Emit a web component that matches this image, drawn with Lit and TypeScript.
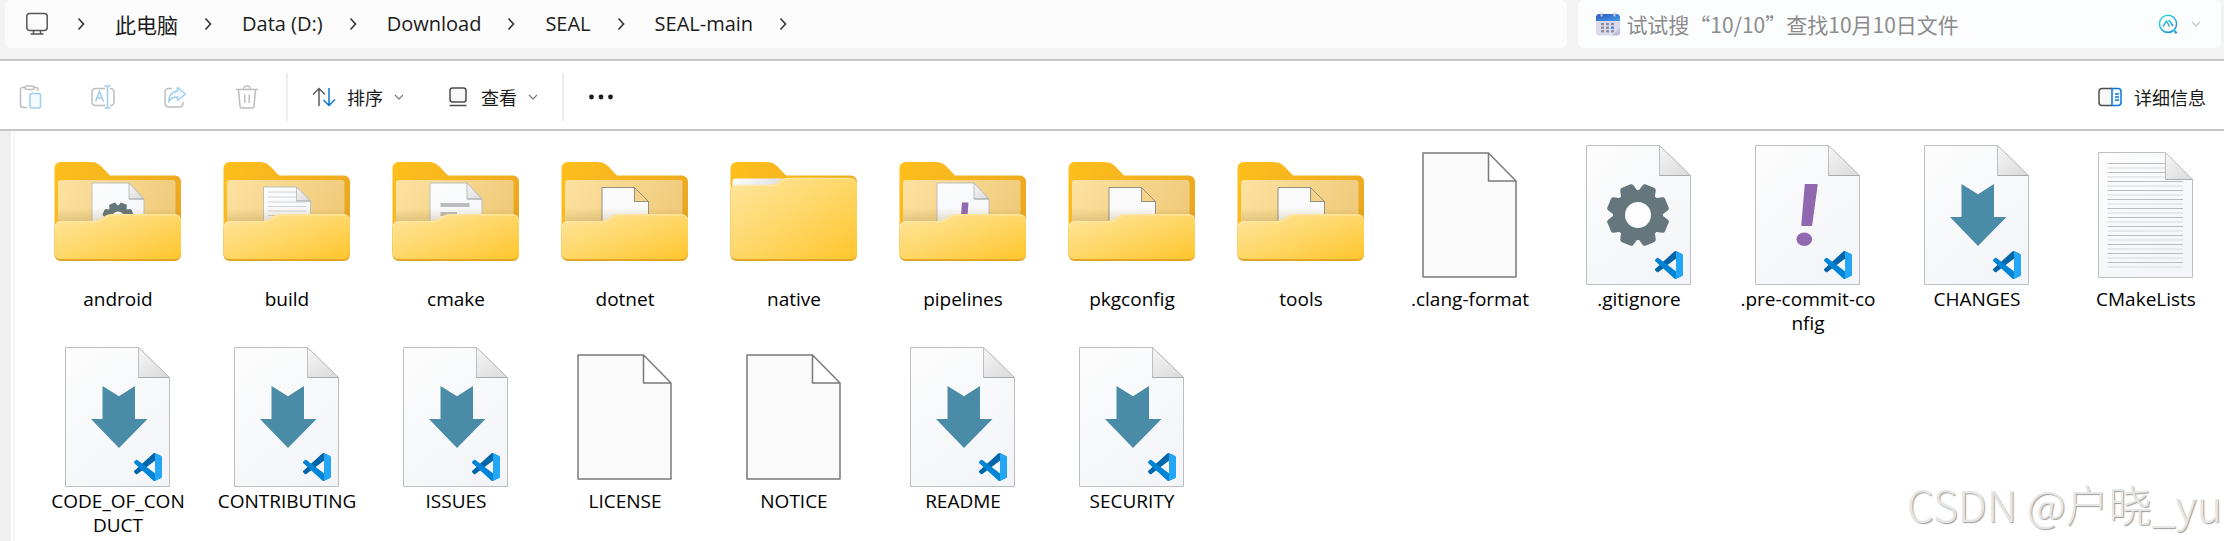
import { LitElement, html, svg, css } from "lit";
import { customElement, state } from "lit/decorators.js";

type Badge = "gear" | "bang" | "arrow";
type Inner = "gear" | "bang" | "bars" | "lines" | "blank" | "closed";

interface Entry {
  name: string;
  kind: "folder" | "code" | "text" | "blank";
  detail?: Badge | Inner;
}

const ENTRIES: Entry[] = [
  { name: "android", kind: "folder", detail: "gear" },
  { name: "build", kind: "folder", detail: "lines" },
  { name: "cmake", kind: "folder", detail: "bars" },
  { name: "dotnet", kind: "folder", detail: "blank" },
  { name: "native", kind: "folder", detail: "closed" },
  { name: "pipelines", kind: "folder", detail: "bang" },
  { name: "pkgconfig", kind: "folder", detail: "blank" },
  { name: "tools", kind: "folder", detail: "blank" },
  { name: ".clang-format", kind: "blank" },
  { name: ".gitignore", kind: "code", detail: "gear" },
  { name: ".pre-commit-config", kind: "code", detail: "bang" },
  { name: "CHANGES", kind: "code", detail: "arrow" },
  { name: "CMakeLists", kind: "text" },
  { name: "CODE_OF_CONDUCT", kind: "code", detail: "arrow" },
  { name: "CONTRIBUTING", kind: "code", detail: "arrow" },
  { name: "ISSUES", kind: "code", detail: "arrow" },
  { name: "LICENSE", kind: "blank" },
  { name: "NOTICE", kind: "blank" },
  { name: "README", kind: "code", detail: "arrow" },
  { name: "SECURITY", kind: "code", detail: "arrow" },
];

const CRUMBS = ["此电脑", "Data (D:)", "Download", "SEAL", "SEAL-main"];

const range = (n: number) => Array.from({ length: n }, (_, i) => i);

/* Gear centred on the origin, outer radius 31. */
const gear = () => svg`
  <circle r="25" fill="#65767c"/>
  ${range(8).map(
    (i) => svg`<path transform="rotate(${22.5 + i * 45})" fill="#65767c"
      d="M-9 -22 L-7 -29.5 Q-6.5 -31 -5 -31.2 L5 -31.2 Q6.500 -31 7 -29.5 L9 -22Z"/>`
  )}
  <circle r="13" fill="#fdfdfe"/>`;

const vscode = () => svg`
  <g transform="translate(86 109) scale(.28)">
    <path fill="#0065a9" d="M96.46 10.8 75.86.88a6.23 6.23 0 0 0-7.11 1.2L1.3 63.58a4.17 4.17 0 0 0 0 6.17l5.51 5a4.17 4.17 0 0 0 5.32.24L93.36 13.37A4.14 4.14 0 0 1 100 16.67v-.24a6.25 6.25 0 0 0-3.54-5.63Z"/>
    <path fill="#0084d6" d="M96.46 89.2 75.86 99.12a6.23 6.23 0 0 1-7.11-1.2L1.3 36.42a4.17 4.17 0 0 1 0-6.17l5.51-5a4.17 4.17 0 0 1 5.32-.24l81.23 61.62A4.14 4.14 0 0 0 100 83.33v.24a6.25 6.25 0 0 1-3.54 5.63Z"/>
    <path fill="#23a6f5" d="M75.86 99.13a6.23 6.23 0 0 1-7.11-1.21c2.3 2.3 6.25.67 6.25-2.59V4.67c0-3.26-3.94-4.9-6.25-2.59a6.23 6.23 0 0 1 7.11-1.2l20.6 9.9A6.25 6.25 0 0 1 100 16.42v67.17a6.25 6.25 0 0 1-3.54 5.63Z"/>
  </g>`;

const sheet = (l: number, t: number, r: number, b: number, fold: number, h: number) => svg`
  <path d="M${l} ${t}H${fold}L${r} ${t + h}V${b}H${l}Z" fill="url(#paper)" stroke="#bcbec0" stroke-width="1"/>
  <path d="M${fold} ${t}L${r} ${t + h}H${fold}Z" fill="url(#fold)" stroke="#bcbec0" stroke-width="1"/>
  <path d="M${fold} ${t + h}H${r}" stroke="#a9abad" stroke-width="1"/>`;

const plainSheet = (l: number, t: number, r: number, b: number, fold: number, h: number, w: number) => svg`
  <path d="M${l} ${t}H${fold}L${r} ${t + h}V${b}H${l}Z M${fold} ${t}V${t + h}H${r}"
    fill="#fafafa" stroke="#7a7a78" stroke-width="${w}" stroke-linejoin="round"/>`;

const inner = (detail: Inner) => {
  switch (detail) {
    case "gear":
      return svg`${sheet(44, 41, 96, 100, 81, 16)}<g transform="translate(70 76) scale(.5)">${gear()}</g>`;
    case "bang":
      return svg`${sheet(44, 41, 96, 100, 81, 16)}<path d="M69 60.500h6.500L74 80h-6.500Z" fill="#9068b0"/>`;
    case "bars":
      return svg`${sheet(44, 41, 96, 100, 81, 16)}
        <path d="M54.500 61h29v4h-29zM54.500 70H71v4H54.500z" fill="#bcbcbc"/>`;
    case "lines":
      return svg`${sheet(46.5, 45, 93.500, 100, 79.5, 14)}
        <path d="M51 50h28M51 55h28M51 60h38M51 64.500h38M51 69h38M51 73.500h38M51 78h38" stroke="#d0d2d3"/>`;
    default:
      return plainSheet(47, 45.5, 93.5, 100, 79.5, 14, 0.8);
  }
};

const FRONT_OPEN =
  "M6.500 86a6 6 0 0 1 6-6H45C55 80 55 73 64 73H127a6 6 0 0 1 6 6V113a6 6 0 0 1-6 6H12.500a6 6 0 0 1-6-6Z";
const FRONT_CLOSED =
  "M6.500 49a6 6 0 0 1 6-6H45C56 43 56 36 65 36H127a6 6 0 0 1 6 6V113a6 6 0 0 1-6 6H12.500a6 6 0 0 1-6-6Z";

const folder = (detail: Inner) => {
  const closed = detail === "closed";
  const front = closed ? FRONT_CLOSED : FRONT_OPEN;
  return svg`
    <path fill="url(#back)" d="M6.500 26a6 6 0 0 1 6-6H42C51 20 53 24 62 33.500H127a6 6 0 0 1 6 6V112H6.500Z"/>
    ${closed
      ? svg`<path fill="url(#slip)" d="M8.500 50V39.500a3 3 0 0 1 3-3H66V50Z"/>`
      : svg`
        <rect x="10" y="38" width="117.500" height="60" rx="3" fill="url(#panel)"/>
        ${inner(detail)}
        <path d="M10 80H46C55 80 55 73 64 73H132V66H10Z" fill="url(#shade)"/>`}
    <path d="${front}" fill="#e2a526"/>
    <path d="${front}" fill="url(#front)" transform="translate(0 .5) scale(1 .98)"/>
    <path d="${closed
      ? "M7 47a6 6 0 0 1 5.500-3.500H46C57 43.500 57 36.500 66 36.500H127"
      : "M7 84a6 6 0 0 1 5.500-4H46C56 80 56 73 65 73H127a6 6 0 0 1 5.500 4"}"
      fill="none" stroke="#ffeebc" stroke-width="1" opacity=".8"/>`;
};

const badge = (detail: Badge) => {
  if (detail === "gear") return svg`<g transform="translate(69 73)">${gear()}</g>`;
  if (detail === "bang")
    return svg`<path d="M66.800 42H79q.8 0 .6 1.500L74.200 83q-.2 1-1.200 1h-9q-.8 0-.7-1Z" fill="#9068b0"/>
      <ellipse cx="66.300" cy="97.300" rx="7.800" ry="6.800" fill="#9068b0"/>`;
  return svg`<path d="M54.500 42 71 52.300 87 42V75H99.500L71 104 43 75H54.500Z" fill="#4a8ba8"/>`;
};

const art = (e: Entry) => {
  if (e.kind === "folder") return folder(e.detail as Inner);
  if (e.kind === "code")
    return svg`${sheet(17.5, 3.5, 121.5, 142.5, 90.5, 30)}${badge(e.detail as Badge)}${vscode()}`;
  if (e.kind === "blank") return plainSheet(23, 11, 116, 135, 88.5, 28, 1.5);
  return svg`
    ${sheet(22.5, 10.5, 116.5, 135.5, 89.5, 27)}
    ${range(12).map((i) => {
      const end = i < 2 ? 89 : 107;
      return svg`<path d="M31.500 ${21.5 + i * 9}H${end}" stroke="#babcbe"/>
        <path d="M31.500 ${26 + i * 9}H${end}" stroke="#e2e3e4" stroke-width="1.500"/>`;
    })}`;
};

const defs = html`
  <svg class="defs" width="0" height="0" aria-hidden="true">
    <defs>
      <linearGradient id="back" x1="0" y1="0" x2="1" y2=".6">
        <stop offset="0" stop-color="#ffc01c"/><stop offset="1" stop-color="#eaa620"/>
      </linearGradient>
      <linearGradient id="panel" x1="0" y1="0" x2="1" y2=".3">
        <stop offset="0" stop-color="#fde2a0"/><stop offset="1" stop-color="#f0cb7c"/>
      </linearGradient>
      <linearGradient id="front" x1="0" y1="0" x2="1" y2="1">
        <stop offset="0" stop-color="#ffe69e"/><stop offset=".5" stop-color="#ffd768"/><stop offset="1" stop-color="#ffc62c"/>
      </linearGradient>
      <linearGradient id="shade" x1="0" y1="0" x2="0" y2="1">
        <stop offset="0" stop-color="#8a6a20" stop-opacity="0"/><stop offset="1" stop-color="#8a6a20" stop-opacity=".22"/>
      </linearGradient>
      <linearGradient id="slip" x1="0" y1="0" x2="1" y2=".4">
        <stop offset="0" stop-color="#ffffff"/><stop offset="1" stop-color="#d8dade"/>
      </linearGradient>
      <linearGradient id="paper" x1="0" y1="0" x2=".6" y2="1">
        <stop offset="0" stop-color="#fdfdfd"/><stop offset="1" stop-color="#f3f5f8"/>
      </linearGradient>
      <linearGradient id="fold" x1="0" y1="0" x2=".8" y2="1">
        <stop offset="0" stop-color="#f6f6f6"/><stop offset="1" stop-color="#dcdcdc"/>
      </linearGradient>
      <linearGradient id="ai" x1="0" y1="0" x2="1" y2="1">
        <stop offset="0" stop-color="#2ee6c8"/><stop offset="1" stop-color="#2a7fe8"/>
      </linearGradient>
      <linearGradient id="cal" x1="0" y1="0" x2="1" y2="1">
        <stop offset="0" stop-color="#2f56bf"/><stop offset="1" stop-color="#3fa0e8"/>
      </linearGradient>
    </defs>
  </svg>`;

const chevronRight = html`
  <svg width="8" height="14" viewBox="0 0 8 14" aria-hidden="true">
    <path d="M1.500 1.500 6.500 7 1.500 12.500" fill="none" stroke="#333" stroke-width="1.600"/>
  </svg>`;

const chevronDown = (color: string, w = 10) => html`
  <svg width=${w} height="8" viewBox="0 0 10 8" aria-hidden="true">
    <path d="M1 2 5 6 9 2" fill="none" stroke=${color} stroke-width="1.200"/>
  </svg>`;

const icon = (body: unknown) =>
  html`<svg width="24" height="24" viewBox="0 0 24 24" fill="none" stroke-width="1.500" aria-hidden="true">${body}</svg>`;

const pasteIcon = icon(svg`
  <path d="M8 22.500H4A2.500 2.500 0 0 1 1.500 20V4.500A2 2 0 0 1 3.500 2.500H6M15 2.500h2a2 2 0 0 1 2 2V6" stroke="#bdbdbd"/>
  <rect x="6" y="1" width="9" height="3.500" rx="1.700" stroke="#bdbdbd"/>
  <rect x="11" y="8.500" width="10.500" height="14.500" rx="2" stroke="#9fcdf0" fill="#f4faff"/>`);

const renameIcon = icon(svg`
  <path d="M14 3.500H4.500A3.500 3.500 0 0 0 1 7v10a3.500 3.500 0 0 0 3.500 3.500H14M19 3.500h.5A3.500 3.500 0 0 1 23 7v10a3.500 3.500 0 0 1-3.500 3.500H19" stroke="#bdbdbd"/>
  <path d="M4.500 16.500 8.500 6.500l4 10M6 13h5M13.500 1h6M16.500 1v22M13.500 23h6" stroke="#9fcdf0"/>`);

const shareIcon = icon(svg`
  <path d="M9 3.500H5.500a3.500 3.500 0 0 0-3.500 3.500v11.500A3.500 3.500 0 0 0 5.500 22h11a3.500 3.500 0 0 0 3.500-3.500V17" stroke="#bdbdbd"/>
  <path d="M14.500 2.500 22.500 9l-8 6.500V12C10 12 7.500 13.500 5.500 17 6 10.500 9.500 6.500 14.500 6Z" stroke="#9fcdf0" fill="#f4faff" stroke-linejoin="round"/>`);

const trashIcon = icon(svg`
  <path d="M1 4.500H23M8.500 4.500a3.500 3.500 0 0 1 7 0M3.500 4.500 5 21a2.200 2.200 0 0 0 2.200 2h9.600A2.200 2.200 0 0 0 19 21L20.500 4.500M9.700 9.500v8.500M14.300 9.500v8.500" stroke="#bdbdbd"/>`);

const sortIcon = icon(svg`
  <path d="M7 21V3.500M1 9.500 7 3.500l6 6" stroke="#5c5c5c"/>
  <path d="M17 3v17.500M11.500 15l5.500 5.500 6-6" stroke="#0a78d4"/>`);

const viewIcon = icon(svg`
  <rect x="4" y="3" width="16" height="14" rx="2.500" stroke="#4c4c4c" fill="#f8f8f8"/>
  <path d="M3.500 20.500h17" stroke="#4c4c4c"/>`);

const detailsIcon = html`
  <svg width="24" height="20" viewBox="0 0 24 20" fill="none" stroke-width="1.500" aria-hidden="true">
    <path d="M14 1.500H4A3 3 0 0 0 1 4.500v11a3 3 0 0 0 3 3H14" stroke="#505050" fill="#f8f8f8"/>
    <path d="M14 1.500h6a3 3 0 0 1 3 3v11a3 3 0 0 1-3 3H14ZM17 7h4M17 10h4M17 13h4" stroke="#0a78d4" fill="#f2f9ff"/>
  </svg>`;

const monitorIcon = icon(svg`
  <rect x="1.800" y="1.500" width="20.400" height="17" rx="3" stroke="#555"/>
  <path d="M8.500 19v3M15.500 19v3M5.500 22h13" stroke="#555"/>`);

const calendarIcon = html`
  <svg width="25" height="24" viewBox="0 0 25 24" aria-hidden="true">
    <rect x="1" y="3" width="24" height="20.500" rx="3" fill="#dcd9ea"/>
    <path d="M1 9V5.500A3.500 3.500 0 0 1 4.500 2h17A3.500 3.500 0 0 1 25 5.500V9Z" fill="url(#cal)"/>
    <path d="M6.500 .5v4M19.500 .5v4" stroke="#c9c7d6" stroke-width="2"/>
    ${range(3).map((r) =>
      range(3).map(
        (c) => svg`<rect x="${6 + c * 5}" y="${11 + r * 3.6}" width="3" height="2.200" fill="${r === 1 && c === 2 ? "#2f86e0" : "#8b8a9c"}"/>`
      )
    )}
    <path d="M17 23.500 25 16v4.500a3 3 0 0 1-3 3Z" fill="#c3bedb"/>
  </svg>`;

const aiIcon = html`
  <svg width="20" height="20" viewBox="0 0 20 20" fill="none" stroke="url(#ai)" aria-hidden="true">
    <circle cx="10" cy="9.800" r="8.600" stroke-width="1.600"/>
    <path d="M15.500 15.500 18.500 19.200" stroke-width="2.200"/>
    <path d="M5 12.500 8.500 7 11.500 12.500M10.500 7.500 11.500 6.500 15 12" stroke-width="1.400"/>
  </svg>`;

@customElement("app-root")
export class AppRoot extends LitElement {
  @state() private query = "";

  static styles = css`
    :host {
      display: flex;
      flex-direction: column;
      position: relative;
      min-height: 100vh;
      overflow: hidden;
      background: #fff;
      color: #1b1b1b;
      font-family: "Open Sans", "Noto Sans", "Noto Sans CJK SC", sans-serif;
      font-size: 18px;
      line-height: 24px;
    }
    * {
      box-sizing: border-box;
    }
    svg {
      display: block;
      flex: none;
    }
    .defs {
      position: absolute;
    }
    a {
      color: inherit;
      text-decoration: none;
    }
    button {
      display: flex;
      align-items: center;
      padding: 0;
      border: 0;
      background: none;
      color: inherit;
      font: inherit;
    }
    .cjk {
      font-family: "Noto Sans CJK SC", sans-serif;
    }

    .top {
      display: flex;
      gap: 11px;
      padding: 0 3px 11px 5px;
      background: #f3f3f3;
      border-bottom: 2px solid #c6c6c6;
    }
    .address {
      flex: 1;
      display: flex;
      align-items: center;
      height: 48px;
      padding-left: 20px;
      border-radius: 6px;
      background: #fcfcfc;
    }
    .path {
      display: flex;
      align-items: center;
      gap: 30px;
      margin: 0;
      padding: 0;
      list-style: none;
      font-size: 20px;
    }
    .path li {
      display: flex;
      align-items: center;
      gap: 26px;
      white-space: nowrap;
    }
    .path li:first-child {
      gap: 28px;
    }
    .path .cjk {
      font-size: 21px;
    }
    .search {
      flex: 0 0 29%;
      display: flex;
      align-items: center;
      height: 48px;
      padding: 0 19px 0 17px;
      gap: 6px;
      border-radius: 6px;
      background: #fbfdfe;
    }
    .search input {
      flex: 1;
      min-width: 0;
      height: 32px;
      padding: 0;
      border: 0;
      outline: 0;
      background: none;
      color: #333;
      font: 21px/32px "Noto Sans CJK SC", sans-serif;
    }
    .search input::placeholder {
      color: #8b8b8b;
      opacity: 1;
    }
    .assist {
      gap: 12px;
    }

    .tools {
      display: flex;
      align-items: center;
      height: 70px;
      padding: 4px 18px 0 19px;
      border-bottom: 2px solid #c6c6c6;
    }
    .edit {
      display: flex;
      gap: 48px;
    }
    .rule {
      width: 2px;
      height: 48px;
      background: #ececec;
    }
    .edit + .rule {
      margin: 0 24px 0 27px;
    }
    .menus {
      display: flex;
      gap: 42px;
      margin-right: 24px;
    }
    .menus button {
      gap: 11px;
    }
    .more {
      margin-left: 24px;
    }
    .details {
      gap: 12px;
      margin-left: auto;
    }

    .body {
      flex: 1;
      display: flex;
    }
    .tree {
      flex: none;
      width: 11px;
      background: #efefef;
    }
    .files {
      flex: 1;
      display: grid;
      grid-template-columns: repeat(auto-fill, 140px);
      align-content: start;
      gap: 9px 29px;
      margin: 0 0 0 2px;
      padding: 11px 0 0 33px;
      border-left: 2px solid #f6f6f6;
      list-style: none;
      color: #000;
      font-size: 19px;
    }
    .file {
      display: flex;
      flex-direction: column;
      align-items: center;
      min-height: 192px;
      text-align: center;
    }
    .name {
      width: 100%;
      word-break: break-all;
    }
    .mark {
      position: absolute;
      right: 2px;
      bottom: 8px;
      margin: 0;
      color: #e6e6e6;
      font: 300 43px/60px "Noto Sans CJK SC", sans-serif;
      text-shadow: 1px 1px 1px #9c9c9c;
      pointer-events: none;
    }
  `;

  private renderTop() {
    return html`
      <header class="top">
        <nav class="address" aria-label="地址">
          <ol class="path">
            <li>${monitorIcon} ${chevronRight}</li>
            ${CRUMBS.map(
              (c, i) => html`<li><a class=${i === 0 ? "cjk" : ""} href="#">${c}</a>${chevronRight}</li>`
            )}
          </ol>
        </nav>
        <div class="search">
          ${calendarIcon}
          <input
            type="text"
            aria-label="搜索"
            placeholder="试试搜“10/10”查找10月10日文件"
            .value=${this.query}
            @input=${(e: Event) => (this.query = (e.target as HTMLInputElement).value)}
          />
          <button class="assist" aria-label="搜索选项">${aiIcon}${chevronDown("#c4c4c4", 12)}</button>
        </div>
      </header>`;
  }

  private renderTools() {
    return html`
      <div class="tools" role="toolbar">
        <div class="edit">
          <button aria-label="粘贴" disabled>${pasteIcon}</button>
          <button aria-label="重命名" disabled>${renameIcon}</button>
          <button aria-label="共享" disabled>${shareIcon}</button>
          <button aria-label="删除" disabled>${trashIcon}</button>
        </div>
        <span class="rule"></span>
        <div class="menus">
          <button class="cjk">${sortIcon}<span>排序</span>${chevronDown("#777")}</button>
          <button class="cjk">${viewIcon}<span>查看</span>${chevronDown("#777")}</button>
        </div>
        <span class="rule"></span>
        <button class="more" aria-label="更多">
          <svg width="26" height="6" viewBox="0 0 26 6" fill="#1b1b1b" aria-hidden="true">
            <circle cx="3.500" cy="3" r="2.400"/><circle cx="13" cy="3" r="2.400"/><circle cx="22.500" cy="3" r="2.400"/>
          </svg>
        </button>
        <button class="details cjk">${detailsIcon}<span>详细信息</span></button>
      </div>`;
  }

  render() {
    return html`
      ${defs} ${this.renderTop()} ${this.renderTools()}
      <main class="body">
        <div class="tree"></div>
        <ul class="files">
          ${ENTRIES.map(
            (e) => html`
              <li>
                <a class="file" href="#">
                  <svg width="140" height="145" viewBox="0 0 140 145" aria-hidden="true">${art(e)}</svg>
                  <span class="name">${e.name}</span>
                </a>
              </li>`
          )}
        </ul>
      </main>
      <p class="mark">CSDN @户晓_yu</p>`;
  }
}
